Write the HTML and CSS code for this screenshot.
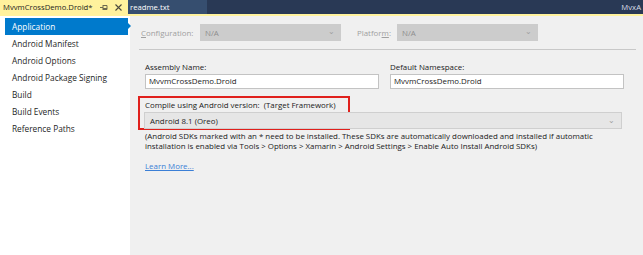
FILE: index.html
```html
<!DOCTYPE html>
<html lang="en">
<head>
    <meta charset="UTF-8">
    <title>MvvmCrossDemo.Droid - Properties</title>
    <link rel="stylesheet" href="styles.css">
</head>
<body>
    <div class="tabbar">
        <div class="tab active">
            <span class="tab-title">MvvmCrossDemo.Droid*</span>
            <svg class="tab-pin" width="8" height="7" viewBox="0 0 8 7">
                <path d="M0 3.5h3M3 1v5M3 1.5h4v4H3M3 4.5h4" fill="none" stroke="#6d6a4f" stroke-width="1"/>
            </svg>
            <svg class="tab-close" width="7" height="7" viewBox="0 0 7 7">
                <path d="M0.5 0.5l6 6M6.5 0.5l-6 6" stroke="#4b4a3d" stroke-width="1.1"/>
            </svg>
        </div>
        <div class="tab other">readme.txt</div>
        <div class="tab-spacer"></div>
        <div class="tab-right">MvxA</div>
    </div>

    <div class="main">
        <ul class="sidebar">
            <li class="nav-item selected">Application</li>
            <li class="nav-item">Android Manifest</li>
            <li class="nav-item">Android Options</li>
            <li class="nav-item">Android Package Signing</li>
            <li class="nav-item">Build</li>
            <li class="nav-item">Build Events</li>
            <li class="nav-item">Reference Paths</li>
        </ul>

        <div class="content">
            <div class="config-row">
                <span class="label-disabled"><u>C</u>onfiguration:</span>
                <div class="select disabled">N/A <span class="chev">&#x2304;</span></div>
                <span class="label-disabled platform">Platfor<u>m</u>:</span>
                <div class="select disabled">N/A <span class="chev">&#x2304;</span></div>
            </div>
            <div class="rule"></div>

            <div class="name-row">
                <div class="field">
                    <label>Assembly Name:</label>
                    <div class="textbox">MvvmCrossDemo.Droid</div>
                </div>
                <div class="field">
                    <label>Default Namespace:</label>
                    <div class="textbox">MvvmCrossDemo.Droid</div>
                </div>
            </div>

            <div class="framework">
                <div class="highlight"></div>
                <label>Compile using Android version:&nbsp; (Target Framework)</label>
                <div class="select wide">Android 8.1 (Oreo) <span class="chev">&#x2304;</span></div>
            </div>

            <p class="note">(Android SDKs marked with an * need to be installed. These SDKs are automatically downloaded and installed if automatic installation is enabled via Tools &gt; Options &gt; Xamarin &gt; Android Settings &gt; Enable Auto Install Android SDKs)</p>

            <a class="learn" href="#">Learn More...</a>
        </div>
    </div>
</body>
</html>
```

FILE: styles.css
```css
body {
    margin: 0;
    width: 643px;
    height: 255px;
    overflow: hidden;
    font-family: "Open Sans", "Noto Sans", sans-serif;
    font-size: 7.9px;
    color: #1a1a1a;
    background: #f0f0f0;
}

.tabbar {
    display: flex;
    height: 14px;
    background: #293955;
    border-bottom: 2px solid #fff29d;
    line-height: 14px;
}

.tab {
    display: flex;
    align-items: center;
    padding: 0 6px 0 3px;
    font-size: 7.7px;
}

.tab.active {
    width: 119px;
    background: #fff29d;
    color: #1e1e1e;
}

.tab-title {
    flex: 1;
}

.tab-pin {
    margin-right: 7px;
}

.tab-close {
    display: block;
}

.tab.other {
    width: 71px;
    padding-left: 2px;
    background: #364e6f;
    color: #fff;
}

.tab-spacer {
    flex: 1;
}

.tab-right {
    color: #d8dde6;
    font-size: 7.7px;
    padding-right: 2px;
}

.main {
    display: flex;
    height: 239px;
}

.sidebar {
    list-style: none;
    margin: 0;
    padding: 2px 0 0 0;
    width: 130px;
    background: #fff;
}

.nav-item {
    height: 17px;
    line-height: 17px;
    margin-left: 5px;
    padding-left: 7px;
    font-size: 8.3px;
    color: #1e1e1e;
}

.nav-item.selected {
    position: relative;
    width: 116px;
    background: #007acc;
    color: #fff;
}

.nav-item.selected::after {
    content: "";
    position: absolute;
    right: -3px;
    top: 5px;
    border-left: 3px solid #007acc;
    border-top: 3px solid transparent;
    border-bottom: 3px solid transparent;
}

.content {
    flex: 1;
    padding: 8px 7px 0 9px;
}

.config-row {
    display: flex;
    align-items: center;
    height: 17px;
}

.label-disabled {
    color: #a0a0a0;
    width: 59px;
    padding-left: 2px;
}

.label-disabled.platform {
    width: 40px;
    margin-left: 14px;
}

.select {
    position: relative;
    display: flex;
    align-items: center;
    box-sizing: border-box;
    height: 17px;
    padding-left: 5px;
}

.select.disabled {
    width: 141px;
    background: #cccccc;
    color: #8e8e8e;
}

.chev {
    position: absolute;
    right: 6px;
    top: 1px;
    color: #a0a0a0;
    font-size: 8px;
}

.rule {
    height: 1px;
    background: #c8c8c8;
    margin: 8px 0 0 0;
}

.name-row {
    display: flex;
    gap: 11px;
    margin-top: 11px;
    padding-left: 6px;
}

.field {
    display: flex;
    flex-direction: column;
    width: 234px;
}

.field label {
    height: 12px;
    line-height: 12px;
    margin-bottom: 1px;
}

.textbox {
    box-sizing: border-box;
    height: 15px;
    line-height: 13px;
    padding-left: 3px;
    background: #fff;
    border: 1px solid #c3c3c3;
}

.framework {
    position: relative;
    margin-top: 9px;
    padding-left: 5px;
}

.framework label {
    display: block;
    height: 12px;
    line-height: 12px;
    padding: 1px 0 1px 1px;
}

.select.wide {
    width: 478px;
    background: #e6e6e6;
    border: 1px solid #cfcfcf;
    color: #1e1e1e;
}

.highlight {
    position: absolute;
    left: -1px;
    top: -2px;
    width: 208px;
    height: 30px;
    border: 2px solid #e0201c;
    pointer-events: none;
}

.note {
    margin: 3px 0 0 6px;
    width: 480px;
    line-height: 9.5px;
}

.learn {
    display: inline-block;
    margin: 10px 0 0 6px;
    color: #3b7fd6;
    text-decoration: underline;
}
```
